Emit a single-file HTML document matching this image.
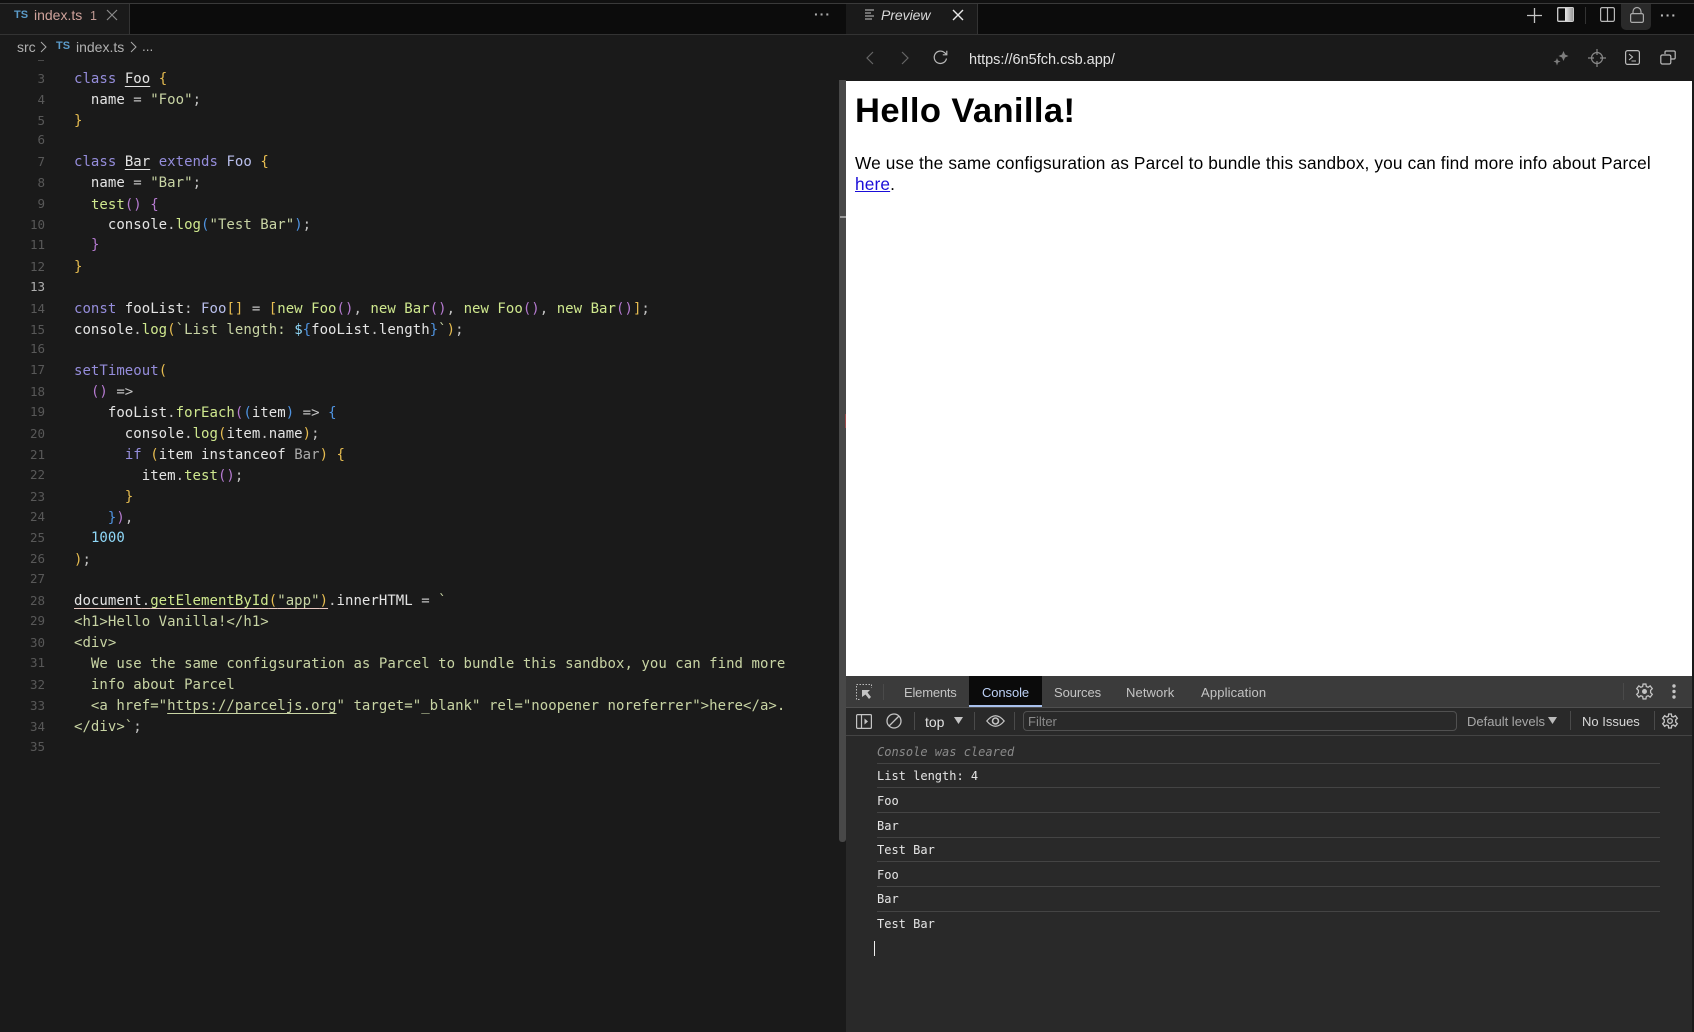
<!DOCTYPE html>
<html><head><meta charset="utf-8"><title>Preview</title>
<style>
*{box-sizing:border-box}
html,body{margin:0;padding:0;width:1694px;height:1032px;overflow:hidden;background:#1a1a1a}
body{position:relative;font-family:"Liberation Sans",sans-serif}
.a{position:absolute}
.t{position:absolute;white-space:pre;line-height:20px}
.code{position:absolute;left:74px;white-space:pre;font:14px/21px "DejaVu Sans Mono",monospace;letter-spacing:.04px;color:#e4e4e4}
.ln{position:absolute;width:45px;text-align:right;left:0;white-space:pre;font:12.5px/21px "DejaVu Sans Mono",monospace;color:#585858}
.k{color:#958ddb}.c{color:#b9bfec}.s{color:#c8d4a4}.f{color:#cfe88e}.y{color:#e6bc50}.p{color:#b57ad0}.b{color:#4f93e0}.n{color:#8fd8f8}.g{color:#c4c4c4}
.u{text-decoration:underline;text-underline-offset:3px;text-decoration-thickness:1px}
.con{position:absolute;left:877px;white-space:pre;font:12px/16px "DejaVu Sans Mono",monospace;color:#e6e6e6}
.sep{position:absolute;left:877px;width:783px;height:1px;background:#444}
.v{position:absolute;width:1px;background:#4a4a4a}
.dt{position:absolute;font-size:13px;line-height:16px;color:#c4c4c4;white-space:pre}
svg{position:absolute;overflow:visible}
</style></head><body>

<!-- top bars -->
<div class="a" style="left:0;top:0;width:1694px;height:3px;background:#111"></div>
<div class="a" style="left:0;top:3px;width:1694px;height:1px;background:#3a3a3a"></div>
<div class="a" style="left:0;top:4px;width:1694px;height:30px;background:#0c0c0c"></div>
<div class="a" style="left:0;top:34px;width:1694px;height:1px;background:#333"></div>
<div class="a" style="left:0;top:4px;width:130px;height:30px;background:#1a1a1a;border-right:1px solid #333"></div>
<div class="t" style="left:14px;top:5px;font-size:11px;font-weight:bold;color:#5b9bc9">TS</div>
<div class="t" style="left:34px;top:5px;font-size:14px;color:#d0a39c">index.ts</div>
<div class="t" style="left:90px;top:6px;font-size:12.5px;color:#c09a94">1</div>
<svg style="left:106px;top:9px" width="12" height="12" viewBox="0 0 12 12"><path d="M1 1L11 11M11 1L1 11" stroke="#8a8a8a" stroke-width="1.2" fill="none"/></svg>
<div class="t" style="left:814px;top:4px;font-size:14px;font-weight:bold;color:#aaa;letter-spacing:1px">···</div>

<!-- breadcrumbs -->
<div class="t" style="left:17px;top:37px;font-size:14px;color:#b0b0b0">src</div>
<svg style="left:40px;top:41px" width="7" height="12" viewBox="0 0 7 12"><path d="M1 1L6 6L1 11" stroke="#aaa" stroke-width="1" fill="none"/></svg>
<div class="t" style="left:56px;top:36px;font-size:11px;font-weight:bold;color:#5b9bc9">TS</div>
<div class="t" style="left:76px;top:37px;font-size:14px;color:#b0b0b0">index.ts</div>
<svg style="left:130px;top:41px" width="7" height="12" viewBox="0 0 7 12"><path d="M1 1L6 6L1 11" stroke="#aaa" stroke-width="1" fill="none"/></svg>
<div class="t" style="left:142px;top:37px;font-size:13.5px;color:#b0b0b0">...</div>
<div class="a" style="left:38px;top:60px;width:6px;height:1px;background:#4a4a4a"></div>

<!-- line numbers -->
<div class="ln" style="top:68px">3</div><div class="ln" style="top:89px">4</div><div class="ln" style="top:110px">5</div><div class="ln" style="top:129px">6</div><div class="ln" style="top:151px">7</div><div class="ln" style="top:172px">8</div><div class="ln" style="top:193px">9</div><div class="ln" style="top:214px">10</div><div class="ln" style="top:234px">11</div><div class="ln" style="top:256px">12</div><div class="ln" style="top:276px;color:#b0b0b0">13</div><div class="ln" style="top:298px">14</div><div class="ln" style="top:319px">15</div><div class="ln" style="top:338px">16</div><div class="ln" style="top:359px">17</div><div class="ln" style="top:381px">18</div><div class="ln" style="top:401px">19</div><div class="ln" style="top:423px">20</div><div class="ln" style="top:444px">21</div><div class="ln" style="top:464px">22</div><div class="ln" style="top:486px">23</div><div class="ln" style="top:506px">24</div><div class="ln" style="top:527px">25</div><div class="ln" style="top:548px">26</div><div class="ln" style="top:568px">27</div><div class="ln" style="top:590px">28</div><div class="ln" style="top:610px">29</div><div class="ln" style="top:632px">30</div><div class="ln" style="top:652px">31</div><div class="ln" style="top:674px">32</div><div class="ln" style="top:695px">33</div><div class="ln" style="top:716px">34</div><div class="ln" style="top:736px">35</div>

<!-- code -->
<div class="code" style="top:69px"><span class="k">class</span> <span class="u">Foo</span> <span class="y">{</span></div>
<div class="code" style="top:90px">  name <span class="g">=</span> <span class="s">"Foo"</span><span class="g">;</span></div>
<div class="code" style="top:111px"><span class="y">}</span></div>
<div class="code" style="top:152px"><span class="k">class</span> <span class="u">Bar</span> <span class="k">extends</span> <span class="c">Foo</span> <span class="y">{</span></div>
<div class="code" style="top:173px">  name <span class="g">=</span> <span class="s">"Bar"</span><span class="g">;</span></div>
<div class="code" style="top:195px">  <span class="f">test</span><span class="p">()</span> <span class="p">{</span></div>
<div class="code" style="top:215px">    console<span class="g">.</span><span class="f">log</span><span class="b">(</span><span class="s">"Test Bar"</span><span class="b">)</span><span class="g">;</span></div>
<div class="code" style="top:235px">  <span class="p">}</span></div>
<div class="code" style="top:257px"><span class="y">}</span></div>
<div class="code" style="top:299px"><span class="k">const</span> fooList<span class="g">:</span> <span class="c">Foo</span><span class="y">[]</span> <span class="g">=</span> <span class="y">[</span><span class="f">new Foo</span><span class="p">()</span><span class="g">,</span> <span class="f">new Bar</span><span class="p">()</span><span class="g">,</span> <span class="f">new Foo</span><span class="p">()</span><span class="g">,</span> <span class="f">new Bar</span><span class="p">()</span><span class="y">]</span><span class="g">;</span></div>
<div class="code" style="top:320px">console<span class="g">.</span><span class="f">log</span><span class="y">(</span><span class="s">`List length: </span><span class="n">$</span><span class="b">{</span>fooList<span class="g">.</span>length<span class="b">}</span><span class="s">`</span><span class="y">)</span><span class="g">;</span></div>
<div class="code" style="top:361px"><span class="k">setTimeout</span><span class="y">(</span></div>
<div class="code" style="top:382px">  <span class="p">()</span> <span class="g">=&gt;</span></div>
<div class="code" style="top:403px">    fooList<span class="g">.</span><span class="f">forEach</span><span class="p">(</span><span class="b">(</span>item<span class="b">)</span> <span class="g">=&gt;</span> <span class="b">{</span></div>
<div class="code" style="top:424px">      console<span class="g">.</span><span class="f">log</span><span class="y">(</span>item<span class="g">.</span>name<span class="y">)</span><span class="g">;</span></div>
<div class="code" style="top:445px">      <span class="k">if</span> <span class="y">(</span>item instanceof <span class="c" style="color:#aaa">Bar</span><span class="y">)</span> <span class="y">{</span></div>
<div class="code" style="top:466px">        item<span class="g">.</span><span class="f">test</span><span class="p">()</span><span class="g">;</span></div>
<div class="code" style="top:487px">      <span class="y">}</span></div>
<div class="code" style="top:508px">    <span class="b">}</span><span class="p">)</span><span class="g">,</span></div>
<div class="code" style="top:528px">  <span class="n">1000</span></div>
<div class="code" style="top:550px"><span class="y">)</span><span class="g">;</span></div>
<div class="code" style="top:591px"><span class="u" style="text-decoration-color:#e8c8c0">document<span class="g">.</span><span class="f">getElementById</span><span class="y">(</span><span class="s">"app"</span><span class="y">)</span></span><span class="g">.</span>innerHTML <span class="g">=</span> <span class="s">`</span></div>
<div class="code" style="top:612px"><span class="s">&lt;h1&gt;Hello Vanilla!&lt;/h1&gt;</span></div>
<div class="code" style="top:633px"><span class="s">&lt;div&gt;</span></div>
<div class="code" style="top:654px"><span class="s">  We use the same configsuration as Parcel to bundle this sandbox, you can find more</span></div>
<div class="code" style="top:675px"><span class="s">  info about Parcel</span></div>
<div class="code" style="top:696px"><span class="s">  &lt;a href="<span class="u">https://parceljs.org</span>" target="_blank" rel="noopener noreferrer"&gt;here&lt;/a&gt;.</span></div>
<div class="code" style="top:717px"><span class="s">&lt;/div&gt;`</span><span class="g">;</span></div>

<!-- editor scrollbar -->
<div class="a" style="left:839px;top:80px;width:7px;height:762px;background:#484848;border-radius:0 0 3px 3px"></div>
<div class="a" style="left:840px;top:216px;width:6px;height:2px;background:#999"></div>
<div class="a" style="left:845px;top:414px;width:1px;height:14px;background:#9a4a4a"></div>

<!-- preview tab -->
<div class="a" style="left:846px;top:4px;width:132px;height:30px;background:#1a1a1a;border-right:1px solid #333"></div>
<svg style="left:865px;top:9px" width="10" height="11" viewBox="0 0 10 11"><path d="M0 1H9M0 4H6M0 7H9M0 10H7" stroke="#c8c8c8" stroke-width="1" fill="none"/></svg>
<div class="t" style="left:881px;top:5px;font-size:14px;font-style:italic;color:#d8d8d8;letter-spacing:-.05px">Preview</div>
<svg style="left:953px;top:10px" width="10" height="10" viewBox="0 0 10 10"><path d="M0 0L10 10M10 0L0 10" stroke="#e8e8e8" stroke-width="1.4" fill="none"/></svg>

<!-- top right icons -->
<svg style="left:1527px;top:8px" width="15" height="15" viewBox="0 0 15 15"><path d="M7.5 0V15M0 7.5H15" stroke="#c4c4c4" stroke-width="1.3" fill="none"/></svg>
<svg style="left:1557px;top:7px" width="17" height="15" viewBox="0 0 17 15"><defs><linearGradient id="pg" x1="0" x2="1" y1="0" y2="0"><stop offset="0" stop-color="#e8e8e8"/><stop offset="1" stop-color="#9a9a9a"/></linearGradient></defs><rect x=".7" y=".7" width="15.6" height="13.6" rx="1" fill="none" stroke="#d0d0d0" stroke-width="1.3"/><rect x="8" y="1" width="8" height="13" fill="url(#pg)"/></svg>
<div class="v" style="left:1585px;top:7px;height:17px;background:#333"></div>
<svg style="left:1600px;top:7px" width="15" height="15" viewBox="0 0 15 15"><rect x=".6" y=".6" width="13.8" height="13.8" rx="1.5" fill="none" stroke="#b8b8b8" stroke-width="1.2"/><path d="M7.5 1V14" stroke="#b8b8b8" stroke-width="1.2"/></svg>
<div class="a" style="left:1621px;top:4px;width:30px;height:26px;background:#2a2a2a;border-radius:0 0 5px 5px"></div>
<svg style="left:1630px;top:7px" width="14" height="16" viewBox="0 0 14 16"><rect x=".6" y="6.6" width="12.8" height="8.8" rx="1.5" fill="none" stroke="#aaa" stroke-width="1.2"/><path d="M3 6.5V4.5a4 4 0 0 1 8 0V6.5" fill="none" stroke="#aaa" stroke-width="1.2"/></svg>
<div class="t" style="left:1660px;top:5px;font-size:14px;font-weight:bold;color:#bbb;letter-spacing:1px">···</div>

<!-- preview toolbar -->
<div class="a" style="left:846px;top:35px;width:848px;height:46px;background:#1a1a1a"></div>
<svg style="left:866px;top:51px" width="8" height="14" viewBox="0 0 8 14"><path d="M7 1L1 7L7 13" stroke="#666" stroke-width="1.2" fill="none"/></svg>
<svg style="left:901px;top:51px" width="8" height="14" viewBox="0 0 8 14"><path d="M1 1L7 7L1 13" stroke="#666" stroke-width="1.2" fill="none"/></svg>
<svg style="left:933px;top:50px" width="15" height="15" viewBox="0 0 15 15"><path d="M13.5 8.5A6.2 6.2 0 1 1 11.5 2.6L13.6 4.5" fill="none" stroke="#b8b8b8" stroke-width="1.2"/><path d="M13.8 .8V4.8H9.8" fill="none" stroke="#b8b8b8" stroke-width="1.2"/></svg>
<div class="t" style="left:969px;top:50px;font-size:14.5px;color:#e2e2e2">https://6n5fch.csb.app/</div>
<svg style="left:1553px;top:51px" width="16" height="15" viewBox="0 0 16 15"><path d="M10.5 0L12 3.5L15.5 5L12 6.5L10.5 10L9 6.5L5.5 5L9 3.5ZM4 7L5 9.5L7.5 10.5L5 11.5L4 14.5L3 11.5L.5 10.5L3 9.5Z" fill="#7e7e7e"/></svg>
<svg style="left:1588px;top:49px" width="18" height="18" viewBox="0 0 18 18"><circle cx="9" cy="9" r="5.5" fill="none" stroke="#888" stroke-width="1.2"/><path d="M9 0V6M9 12V18M0 9H6M12 9H18" stroke="#888" stroke-width="1.2"/></svg>
<svg style="left:1625px;top:50px" width="15" height="15" viewBox="0 0 15 15"><rect x=".6" y=".6" width="13.8" height="13.8" rx="2" fill="none" stroke="#bbb" stroke-width="1.2"/><path d="M4 4L7.5 7L4 10M6.5 11H11" fill="none" stroke="#bbb" stroke-width="1.1"/></svg>
<svg style="left:1660px;top:50px" width="16" height="15" viewBox="0 0 16 15"><path d="M5 4V2.2Q5 1 6.2 1H14Q15.2 1 15.2 2.2V7.8Q15.2 9 14 9H11" fill="none" stroke="#bbb" stroke-width="1.2"/><rect x=".8" y="5" width="10" height="9" rx="1.5" fill="none" stroke="#bbb" stroke-width="1.2"/></svg>

<!-- page -->
<div class="a" style="left:846px;top:81px;width:846px;height:596px;background:#fff"></div>
<div class="a" style="left:855px;top:90px;font-size:34.56px;line-height:42px;font-weight:bold;color:#000;white-space:pre;letter-spacing:.38px">Hello Vanilla!</div>
<div class="a" style="left:855px;top:153px;width:830px;font-size:17.28px;line-height:21px;color:#000;letter-spacing:.14px">We use the same configsuration as Parcel to bundle this sandbox, you can find more info about Parcel<br><span style="color:#1a0dd8;text-decoration:underline">here</span>.</div>

<!-- devtools -->
<div class="a" style="left:846px;top:676px;width:846px;height:356px;background:#292929"></div>
<div class="a" style="left:846px;top:676px;width:846px;height:31px;background:#3b3b3b"></div>
<div class="a" style="left:846px;top:707px;width:846px;height:1px;background:#4f4f4f"></div>
<div class="a" style="left:846px;top:735px;width:846px;height:1px;background:#444"></div>
<svg style="left:856px;top:684px" width="16" height="16" viewBox="0 0 16 16"><rect x=".5" y=".5" width="15" height="15" fill="none" stroke="#bbb" stroke-dasharray="1.5 1.5"/><rect x="4" y="4" width="13" height="13" fill="#3b3b3b"/><path d="M6 6H14L11.5 8.5L15 13L13 15L9.5 10.5L6 13Z" fill="#c4c4c4"/></svg>
<div class="v" style="left:883px;top:684px;height:16px"></div>
<div class="dt" style="left:904px;top:685px;letter-spacing:-.2px">Elements</div>
<div class="a" style="left:969px;top:676px;width:73px;height:31px;background:#0b0b0b;border-bottom:2px solid #a8c0ec"></div>
<div class="dt" style="left:982px;top:685px;color:#bcd0f5;letter-spacing:-.1px">Console</div>
<div class="dt" style="left:1054px;top:685px;letter-spacing:-.1px">Sources</div>
<div class="dt" style="left:1126px;top:685px;letter-spacing:.1px">Network</div>
<div class="dt" style="left:1201px;top:685px;letter-spacing:.15px">Application</div>
<div class="v" style="left:1623px;top:683px;height:17px"></div>
<svg style="left:1636px;top:683px" width="17" height="17" viewBox="0 0 24 24"><path d="M10 1.5H14L14.6 5L17.2 6L20 4L23 8L20.6 10.2V13.8L23 16L20 20L17.2 18L14.6 19L14 22.5H10L9.4 19L6.8 18L4 20L1 16L3.4 13.8V10.2L1 8L4 4L6.8 6L9.4 5Z" fill="none" stroke="#c4c4c4" stroke-width="1.8"/><circle cx="12" cy="12" r="3.5" fill="#c4c4c4"/></svg>
<svg style="left:1672px;top:684px" width="4" height="15" viewBox="0 0 4 15"><circle cx="2" cy="2" r="1.7" fill="#c4c4c4"/><circle cx="2" cy="7.5" r="1.7" fill="#c4c4c4"/><circle cx="2" cy="13" r="1.7" fill="#c4c4c4"/></svg>

<svg style="left:856px;top:714px" width="16" height="15" viewBox="0 0 16 15"><rect x=".6" y=".6" width="14.8" height="13.8" rx="1" fill="none" stroke="#c4c4c4" stroke-width="1.2"/><path d="M5.5 1V14" stroke="#c4c4c4" stroke-width="1.2"/><path d="M8.5 4.5L12 7.5L8.5 10.5Z" fill="#c4c4c4"/></svg>
<svg style="left:886px;top:713px" width="16" height="16" viewBox="0 0 16 16"><circle cx="8" cy="8" r="7" fill="none" stroke="#c4c4c4" stroke-width="1.3"/><path d="M3 13L13 3" stroke="#c4c4c4" stroke-width="1.3"/></svg>
<div class="v" style="left:914px;top:712px;height:18px"></div>
<div class="dt" style="left:925px;top:714px;color:#e0e0e0;font-size:14px">top</div>
<svg style="left:954px;top:717px" width="9" height="7" viewBox="0 0 9 7"><path d="M0 0H9L4.5 7Z" fill="#c4c4c4"/></svg>
<div class="v" style="left:974px;top:712px;height:18px"></div>
<svg style="left:986px;top:714px" width="19" height="14" viewBox="0 0 19 14"><path d="M.8 7Q9.5 -3.5 18.2 7Q9.5 17.5 .8 7Z" fill="none" stroke="#c4c4c4" stroke-width="1.2"/><circle cx="9.5" cy="7" r="3" fill="none" stroke="#c4c4c4" stroke-width="1.6"/></svg>
<div class="v" style="left:1014px;top:712px;height:18px"></div>
<div class="a" style="left:1023px;top:711px;width:434px;height:20px;border:1px solid #505050;border-radius:4px"></div>
<div class="dt" style="left:1028px;top:714px;color:#8a8a8a">Filter</div>
<div class="dt" style="left:1467px;top:714px;color:#a8a8a8">Default levels</div>
<svg style="left:1548px;top:717px" width="9" height="7" viewBox="0 0 9 7"><path d="M0 0H9L4.5 7Z" fill="#bbb"/></svg>
<div class="v" style="left:1570px;top:711px;height:19px"></div>
<div class="dt" style="left:1582px;top:714px;color:#d8d8d8">No Issues</div>
<div class="v" style="left:1654px;top:711px;height:19px"></div>
<svg style="left:1662px;top:713px" width="16" height="16" viewBox="0 0 24 24"><path d="M10 1.5H14L14.6 5L17.2 6L20 4L23 8L20.6 10.2V13.8L23 16L20 20L17.2 18L14.6 19L14 22.5H10L9.4 19L6.8 18L4 20L1 16L3.4 13.8V10.2L1 8L4 4L6.8 6L9.4 5Z" fill="none" stroke="#c4c4c4" stroke-width="2"/><circle cx="12" cy="12" r="3.5" fill="none" stroke="#c4c4c4" stroke-width="2"/></svg>

<!-- console -->
<div class="con" style="top:744px;color:#8a8a8a;font-style:italic">Console was cleared</div>
<div class="sep" style="top:763px"></div>
<div class="con" style="top:768px">List length: 4</div>
<div class="sep" style="top:787px"></div>
<div class="con" style="top:793px">Foo</div>
<div class="sep" style="top:812px"></div>
<div class="con" style="top:818px">Bar</div>
<div class="sep" style="top:837px"></div>
<div class="con" style="top:842px">Test Bar</div>
<div class="sep" style="top:861px"></div>
<div class="con" style="top:867px">Foo</div>
<div class="sep" style="top:886px"></div>
<div class="con" style="top:891px">Bar</div>
<div class="sep" style="top:911px"></div>
<div class="con" style="top:916px">Test Bar</div>
<div class="a" style="left:874px;top:941px;width:1px;height:15px;background:#eee"></div>
</body></html>
